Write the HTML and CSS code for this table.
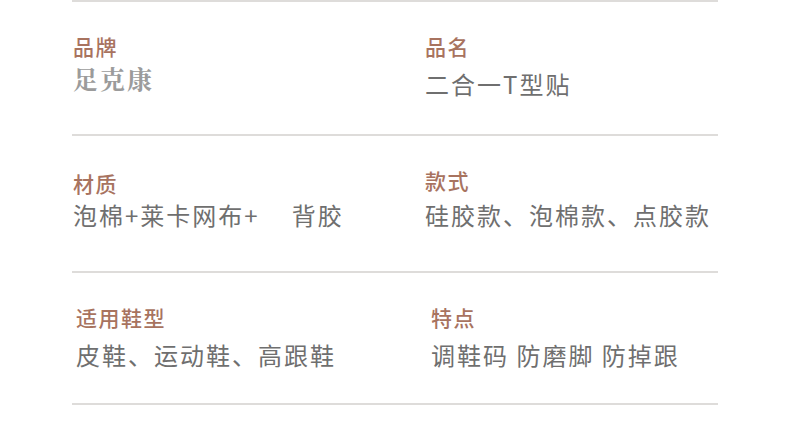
FILE: index.html
```html
<!DOCTYPE html>
<html lang="zh-CN">
<head>
<meta charset="utf-8">
<link rel="stylesheet" href="styles.css">
</head>
<body>
<div class="spec">
  <div class="row row-1">
    <div class="cell">
      <div class="label">品牌</div>
      <div class="value brand">足克康</div>
    </div>
    <div class="cell cell-r">
      <div class="label">品名</div>
      <div class="value v-low">二合一T型贴</div>
    </div>
  </div>
  <div class="row row-2">
    <div class="cell c-down">
      <div class="label">材质</div>
      <div class="value v-tight">泡棉+莱卡网布+<span class="gap"></span>背胶</div>
    </div>
    <div class="cell cell-r">
      <div class="label">款式</div>
      <div class="value">硅胶款、泡棉款、点胶款</div>
    </div>
  </div>
  <div class="row row-3">
    <div class="cell c-shift">
      <div class="label">适用鞋型</div>
      <div class="value">皮鞋、运动鞋、高跟鞋</div>
    </div>
    <div class="cell cell-r c-shift2">
      <div class="label">特点</div>
      <div class="value">调鞋码 防磨脚 防掉跟</div>
    </div>
  </div>
</div>
</body>
</html>
```

FILE: styles.css
```css
html, body {
  margin: 0;
  padding: 0;
  background: #ffffff;
}

body {
  font-family: "Noto Sans CJK SC", "Noto Sans", sans-serif;
}

.spec {
  margin-left: 72px;
  width: 646px;
  border-top: 2px solid #dedcda;
}

.row {
  display: grid;
  grid-template-columns: 352px 1fr;
  border-bottom: 2px solid #dedcda;
  box-sizing: border-box;
}

.row-1 { height: 134px; }
.row-2 { height: 137px; }
.row-3 { height: 132px; }

.cell {
  padding-top: 31px;
  padding-left: 1px;
}

.row-2 .cell { padding-top: 31px; }
.row-2 .c-down { padding-top: 34px; }
.row-3 .cell { padding-top: 31px; }

.c-shift { padding-left: 4px; }
.c-shift2 { padding-left: 7px; }

.label {
  font-size: 21px;
  line-height: 26px;
  font-weight: 500;
  color: #a8735f;
  letter-spacing: 1.5px;
}

.value {
  margin-top: 8px;
  font-size: 24px;
  line-height: 30px;
  color: #6f6f6f;
  letter-spacing: 2px;
}

.row-2 .value { margin-top: 7px; }
.row-2 .v-tight { margin-top: 4px; }
.row-3 .value { margin-top: 10px; }

.v-low { margin-top: 10px; }

.brand {
  margin-top: 4px;
  font-family: "Noto Serif CJK SC", "Noto Sans CJK SC", serif;
  font-size: 25px;
  font-weight: 700;
  color: #9b9b9b;
  letter-spacing: 2px;
}

.gap {
  display: inline-block;
  width: 32px;
}
```
